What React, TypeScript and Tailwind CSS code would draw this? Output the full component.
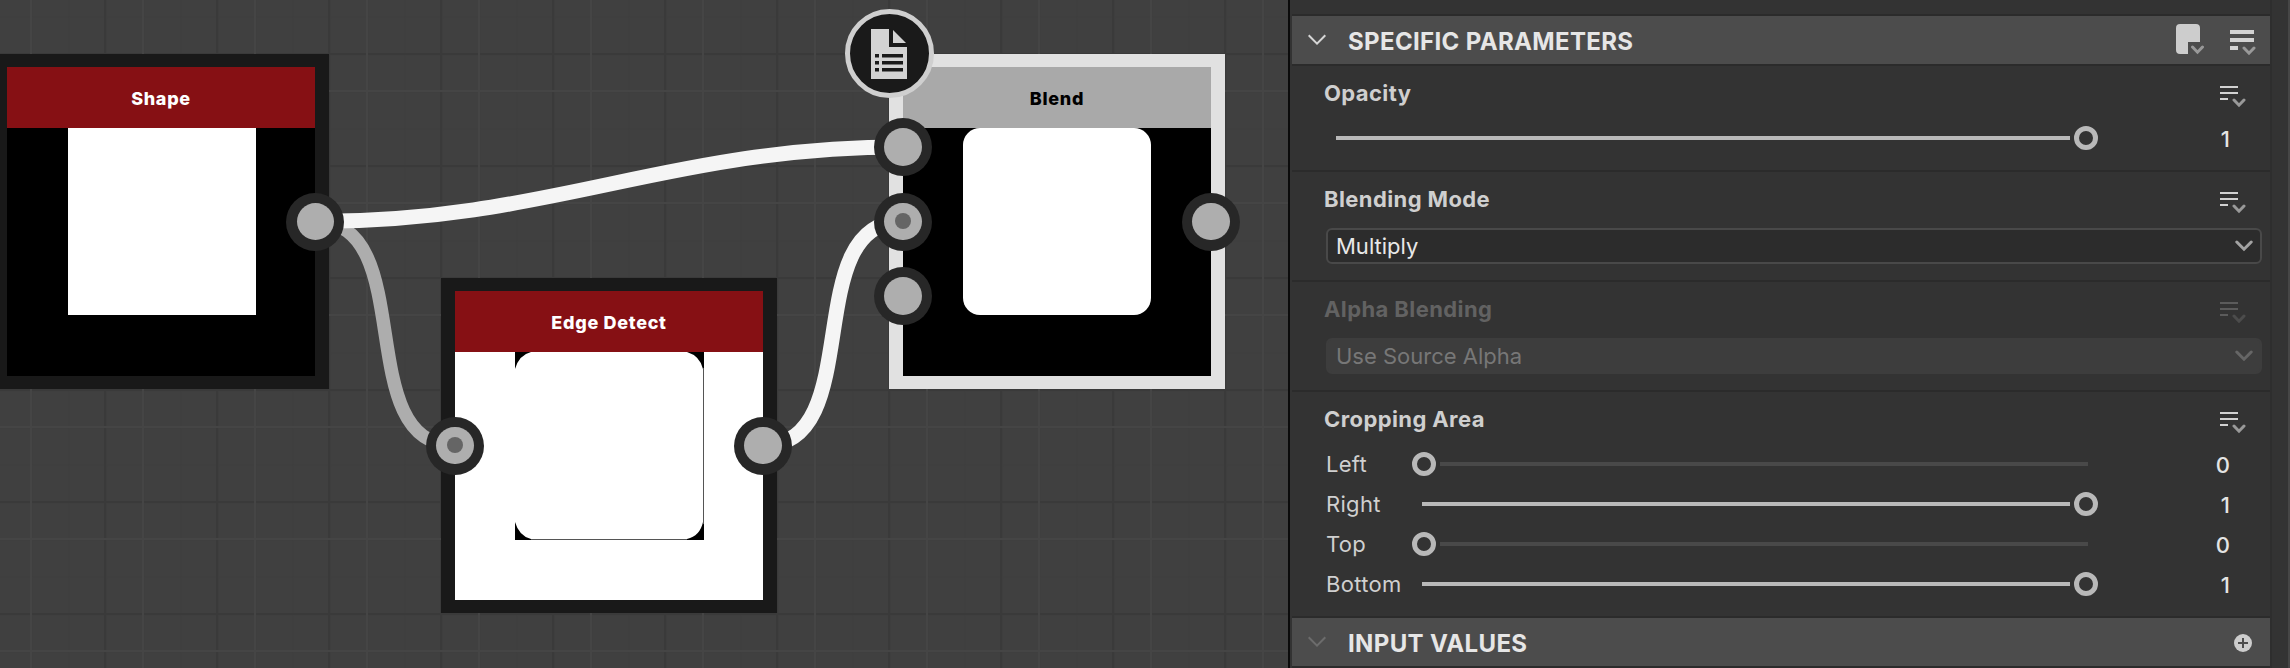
import React from "react";

type Pt = [number, number];

function wirePath([x1, y1]: Pt, [x2, y2]: Pt) {
  const d = Math.hypot(x2 - x1, y2 - y1) * 0.4;
  return `M${x1} ${y1}C${x1 + d} ${y1} ${x2 - d} ${y2} ${x2} ${y2}`;
}

function GridLines() {
  return (
    <svg className="absolute inset-0 h-full w-full" aria-hidden="true">
      <defs>
        <pattern id="minor" x="31" y="91" width="37.333" height="37.333" patternUnits="userSpaceOnUse">
          <path d="M0 .75H38M.75 0V38" stroke="#3e3e3e" strokeWidth="1.5" />
        </pattern>
        <pattern id="major" x="30" y="90" width="112" height="112" patternUnits="userSpaceOnUse">
          <path d="M75 0V112M0 76H112" stroke="#3a3a3a" strokeWidth="2" />
          <path d="M1 0V112M0 1H112" stroke="#454545" strokeWidth="2" />
        </pattern>
      </defs>
      <rect width="100%" height="100%" fill="url(#minor)" />
      <rect width="100%" height="100%" fill="url(#major)" />
    </svg>
  );
}

function Wires() {
  return (
    <svg className="absolute inset-0 h-full w-full" fill="none" aria-hidden="true">
      <path d={wirePath([315.3, 221.5], [455, 445.5])} stroke="#adadad" strokeWidth="13.5" />
      <path d={wirePath([315.3, 221.5], [903, 147])} stroke="#f5f5f5" strokeWidth="15" />
      <path d={wirePath([763, 445.5], [903, 221.5])} stroke="#f5f5f5" strokeWidth="15" />
    </svg>
  );
}

function Port({ x, y, dot = false }: { x: number; y: number; dot?: boolean }) {
  return (
    <div
      className="absolute flex h-[58px] w-[58px] -translate-x-1/2 -translate-y-1/2 items-center justify-center rounded-full bg-[#272727]"
      style={{ left: x, top: y }}
    >
      <div className="flex h-[37.4px] w-[37.4px] items-center justify-center rounded-full bg-[#aeaeae]">
        {dot && <div className="h-4 w-4 rounded-full bg-[#656565]" />}
      </div>
    </div>
  );
}

function GraphNode({
  className,
  headerClass,
  title,
  children,
}: {
  className: string;
  headerClass: string;
  title: React.ReactNode;
  children: React.ReactNode;
}) {
  return (
    <div className={`absolute flex h-[335px] w-[336px] flex-col border-x-[14px] border-y-[13px] ${className}`}>
      <div className={`flex h-[61px] shrink-0 items-center justify-center pt-[2px] text-[18px] font-extrabold tracking-[0.7px] ${headerClass}`}>
        {title}
      </div>
      <div className="flex min-h-0 flex-1 pl-[60px]">{children}</div>
    </div>
  );
}

function Canvas() {
  return (
    <div className="relative h-full w-[1288px] shrink-0 overflow-hidden bg-[#404040]">
      <GridLines />
      <GraphNode className="left-[-7px] top-[54px] border-[#191919] bg-black" headerClass="bg-[#861014] text-white" title="Shape">
        <div className="ml-px h-[187px] w-[188px] bg-white" />
      </GraphNode>
      <GraphNode
        className="left-[441px] top-[278px] border-[#191919] bg-white"
        headerClass="bg-[#861014] text-white"
        title="Edge Detect"
      >
        <svg className="h-[188px] w-[189px]" viewBox="0 0 189 188" aria-hidden="true">
          <path d="M0 0H16Q4 3 0 17ZM172 0H189V17H188Q185 4 172 0ZM0 170Q4 184 16 187V188H0ZM189 170V188H172V187Q185 184 188 170Z" fill="#000" />
          <path d="M188.5 16V172M16 187.5H172" stroke="#555" strokeWidth="1" />
        </svg>
      </GraphNode>
      <GraphNode className="left-[889px] top-[54px] border-[#e1e1e1] bg-black" headerClass="bg-[#a9a9a9] text-black" title="Blend">
        <div className="h-[187px] w-[188px] rounded-[17px] bg-white" />
      </GraphNode>
      <Wires />
      <Port x={315.3} y={221.5} />
      <Port x={455} y={445.5} dot />
      <Port x={763} y={445.5} />
      <Port x={903} y={147} />
      <Port x={903} y={221.5} dot />
      <Port x={903} y={296} />
      <Port x={1211} y={221.5} />
      <div className="absolute left-[844.5px] top-[9px] flex h-[89px] w-[89px] items-center justify-center rounded-full border-[5.5px] border-[#cfcfcf] bg-[#1a1a1a]">
        <svg width="36" height="50" viewBox="0 0 36 50" aria-hidden="true">
          <path d="M0 0H18V18H36V50H0Z" fill="#d3d3d3" />
          <path d="M22 1V14H35Z" fill="#d3d3d3" />
          <path
            d="M4 25H8V28.5H4ZM11 25H32V28.5H11ZM4 32H8V35.5H4ZM11 32H32V35.5H11ZM4 39H8V42.5H4ZM11 39H32V42.5H11Z"
            fill="#1a1a1a"
          />
        </svg>
      </div>
    </div>
  );
}

function MenuIcon({ dim = false }: { dim?: boolean }) {
  return (
    <svg className={`h-[22px] w-[26px] ${dim ? "opacity-25" : ""}`} viewBox="0 0 26 22" aria-hidden="true">
      <path d="M0 0H18V2H0ZM0 6H18V8H0ZM0 12H8V14H0Z" fill="#d2d2d2" />
      <path d="M14 14L19 19.2L24 14" fill="none" stroke="#999" strokeWidth="3" strokeLinecap="round" />
    </svg>
  );
}

function HeaderChevron({ className }: { className: string }) {
  return (
    <svg className={`ml-4 h-3 w-[18px] ${className}`} viewBox="0 0 18 12" fill="none" aria-hidden="true">
      <path d="M.7 1.3L9 9.6L17.3 1.3" stroke="currentColor" strokeWidth="2" />
    </svg>
  );
}

function PanelHeader({ title, chevron, children }: { title: React.ReactNode; chevron: string; children: React.ReactNode }) {
  return (
    <div className="flex h-12 shrink-0 items-center bg-[#4c4c4c]">
      <HeaderChevron className={chevron} />
      <h2 className="ml-[22px] flex-1 pt-[3px] text-[24px] leading-[28px] font-bold tracking-[0.35px] text-[#e6e6e6]">{title}</h2>
      {children}
    </div>
  );
}

function Section({
  title,
  className = "",
  dim = false,
  children,
}: {
  title: React.ReactNode;
  className?: string;
  dim?: boolean;
  children: React.ReactNode;
}) {
  return (
    <section className={`flex shrink-0 flex-col border-b-2 border-[#2b2b2b] pl-8 pt-[13px] ${className}`}>
      <div className="flex h-7 justify-between pr-6">
        <h3 className={`text-[22px] leading-7 font-bold tracking-[0.4px] ${dim ? "text-[#626262]" : "text-[#cfcfcf]"}`}>{title}</h3>
        <div className="pt-[7px]">
          <MenuIcon dim={dim} />
        </div>
      </div>
      {children}
    </section>
  );
}

function Knob() {
  return <div className="h-6 w-6 shrink-0 rounded-full border-[5px] border-[#b9b9b9]" />;
}

function SliderRow({ label, value }: { label?: string; value: 0 | 1 }) {
  return (
    <div className="flex h-10 items-center pr-10">
      {label && <span className="w-[84px] shrink-0 pl-[2px] text-[22px] leading-7 tracking-[0.3px] text-[#d0d0d0]">{label}</span>}
      {value === 1 ? (
        <div className={`flex flex-1 items-center gap-1 ${label ? "pl-[14px]" : "pl-3"}`}>
          <div className="h-1 flex-1 bg-[#b9b9b9]" />
          <Knob />
        </div>
      ) : (
        <div className="flex flex-1 items-center gap-1 pl-1 pr-[10px]">
          <Knob />
          <div className="h-1 flex-1 bg-[#494949]" />
        </div>
      )}
      <span className="w-[132px] pt-[2px] text-right text-[22px] leading-7 font-medium text-[#e4e4e4]">{value}</span>
    </div>
  );
}

function Select({ value, disabled = false }: { value: string; disabled?: boolean }) {
  return (
    <div
      className={`ml-[2px] mr-2 mt-[15px] flex h-9 items-center justify-between rounded-[6px] border-2 pl-2 pr-[7px] text-[22px] ${
        disabled ? "border-[#3d3d3d] bg-[#3d3d3d] text-[#777777]" : "border-[#494949] bg-[#2c2c2c] text-[#e8e8e8]"
      }`}
    >
      <span className="leading-7">{value}</span>
      <svg
        className={`h-3 w-[18px] ${disabled ? "text-[#666]" : "text-[#a3a3a3]"}`}
        viewBox="0 0 18 12"
        fill="none"
        aria-hidden="true"
      >
        <path d="M1.8 2L9 9.2L16.2 2" stroke="currentColor" strokeWidth="3" strokeLinecap="round" />
      </svg>
    </div>
  );
}

function ParameterPanel() {
  return (
    <div className="flex h-full w-[1002px] border-l-2 border-[#0b0b0b] bg-[#333333]">
      <div className="ml-[2px] flex w-[978px] shrink-0 flex-col">
        <div className="h-4 shrink-0 border-b-2 border-[#2b2b2b]" />
        <PanelHeader title="SPECIFIC PARAMETERS" chevron="text-[#d6d6d6]">
          <svg className="mr-[14px] h-12 w-[80px]" viewBox="0 0 80 48" aria-hidden="true">
            <path d="M4 8H20Q24 8 24 12V26H12V38H4Q0 38 0 34V12Q0 8 4 8Z" fill="#cdcdcd" />
            <path d="M16.5 31L21.5 36.2L26.5 31M68 32L73 37.2L78 32" fill="none" stroke="#999" strokeWidth="3" strokeLinecap="round" />
            <path d="M54 14H78V18H54ZM54 22H78V26H54ZM54 30H62V34H54Z" fill="#d2d2d2" />
          </svg>
        </PanelHeader>
        <div className="h-[2px] shrink-0 bg-[#2b2b2b]" />
        <Section title="Opacity" className="h-[106px]">
          <div className="mt-[11px]">
            <SliderRow value={1} />
          </div>
        </Section>
        <Section title="Blending Mode" className="h-[110px]">
          <Select value="Multiply" />
        </Section>
        <Section title="Alpha Blending" className="h-[110px]" dim>
          <Select value="Use Source Alpha" disabled />
        </Section>
        <Section title="Cropping Area" className="h-[226px]">
          <div className="mt-[11px]">
            <SliderRow label="Left" value={0} />
            <SliderRow label="Right" value={1} />
            <SliderRow label="Top" value={0} />
            <SliderRow label="Bottom" value={1} />
          </div>
        </Section>
        <PanelHeader title="INPUT VALUES" chevron="text-[#6c6c6c]">
          <svg className="mr-[18px] mt-[2px] h-[18px] w-[18px]" viewBox="0 0 18 18" aria-hidden="true">
            <circle cx="9" cy="9" r="9" fill="#cdcdcd" />
            <path d="M9 4V14M4 9H14" stroke="#4c4c4c" strokeWidth="2" />
          </svg>
        </PanelHeader>
        <div className="h-[2px] shrink-0 bg-[#2b2b2b]" />
      </div>
      <div className="w-[2px] bg-[#2e2e2e]" />
      <div className="ml-auto w-[2px] bg-[#464646]" />
    </div>
  );
}

export default function App() {
  return (
    <div className="flex h-[668px] w-[2290px] overflow-hidden bg-[#404040] font-['Inter',sans-serif]">
      <Canvas />
      <ParameterPanel />
    </div>
  );
}
